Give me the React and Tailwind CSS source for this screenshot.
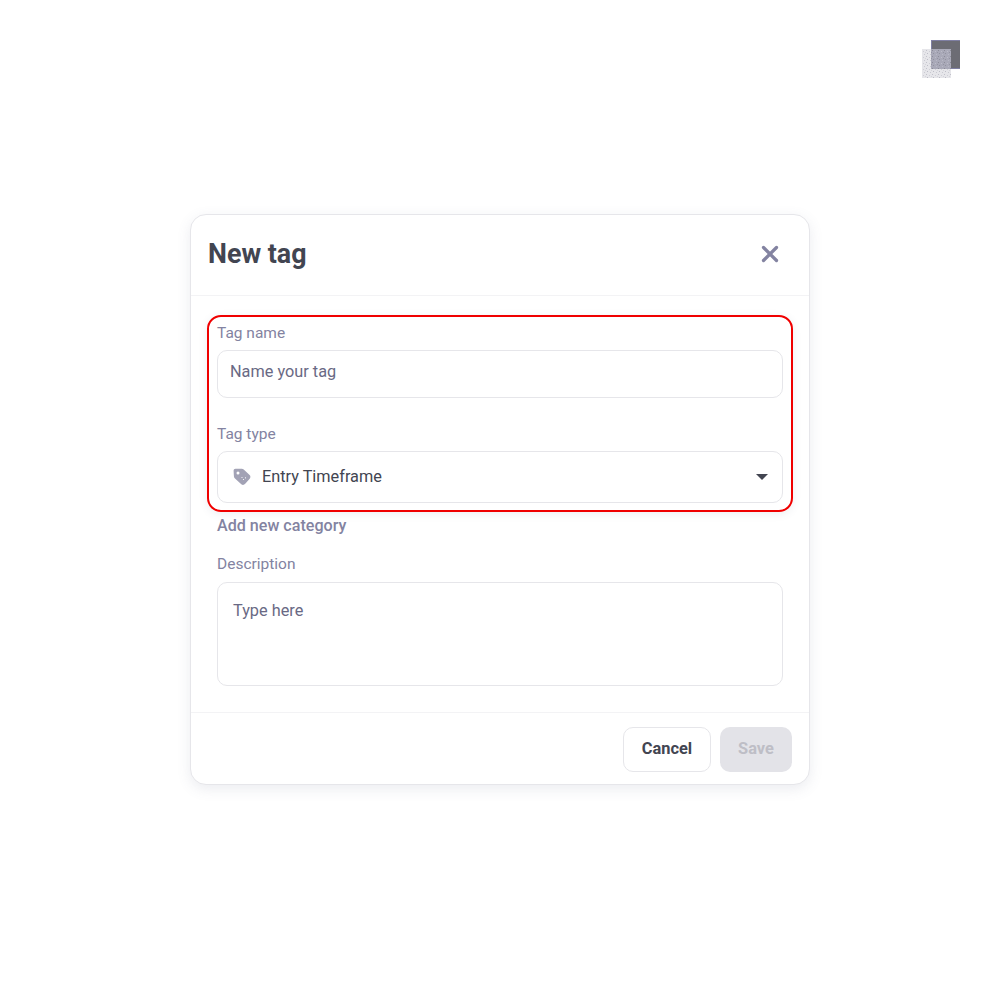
import React from "react";
import { X } from "lucide-react";

const font = { fontFamily: "Roboto, sans-serif" };

// Overlapping squares in the top right corner, the light one is dithered.
function CornerMark() {
  return (
    <svg className="absolute left-[920px] top-[38px]" width="42" height="42" viewBox="0 0 42 42">
      <defs>
        <pattern id="dots" width="6" height="6" patternUnits="userSpaceOnUse">
          <rect width="6" height="6" fill="#e6e6ea" />
          <rect x="0" y="0" width="1" height="1" fill="#c2c2cb" />
          <rect x="3" y="1" width="1" height="1" fill="#cfcfd6" />
          <rect x="1" y="3" width="1" height="1" fill="#bdbdc7" />
          <rect x="4" y="4" width="1" height="1" fill="#c9c9d1" />
          <rect x="5" y="2" width="1" height="1" fill="#d4d4da" />
        </pattern>
        <pattern id="dotsDark" width="6" height="6" patternUnits="userSpaceOnUse">
          <rect width="6" height="6" fill="#a9a9b8" />
          <rect x="0" y="0" width="1" height="1" fill="#8c8c98" />
          <rect x="3" y="1" width="1" height="1" fill="#bdbdc9" />
          <rect x="1" y="3" width="1" height="1" fill="#92929f" />
          <rect x="4" y="4" width="1" height="1" fill="#b9b9c6" />
          <rect x="5" y="2" width="1" height="1" fill="#9494a2" />
        </pattern>
      </defs>
      <rect x="11" y="2" width="29" height="29" fill="#6c6c74" />
      <rect x="11" y="2" width="1" height="29" fill="#7f7fa3" />
      <rect x="11" y="2" width="29" height="1" fill="#7f7fa3" />
      <rect x="31" y="30" width="9" height="1" fill="#7f7fa3" />
      <rect x="2" y="11" width="29" height="29" fill="url(#dots)" />
      <rect x="11" y="11" width="20" height="20" fill="url(#dotsDark)" />
    </svg>
  );
}

function TagIcon() {
  return (
    <svg width="18" height="18" viewBox="0 0 18 18" className="shrink-0">
      <path
        d="M2.500 .8h6.200c.8 0 1.500.3 2 .8l5.900 5.500c1 1 1.100 2.600.1 3.600l-4.700 5.400c-1 1-2.700 1.100-3.700.1L2 10.500c-.7-.6-1.100-1.400-1.100-2.300L.6 2.800C.5 1.700 1.400.8 2.500.8z"
        fill="#a2a2b5"
      />
      <circle cx="5" cy="5" r="1.500" fill="#fff" />
      <circle cx="10.500" cy="11.500" r=".6" fill="#fff" />
      <circle cx="12.500" cy="9.800" r=".6" fill="#fff" />
      <circle cx="9" cy="9.500" r=".6" fill="#fff" />
    </svg>
  );
}

export default function App() {
  return (
    <div className="relative flex h-[1000px] w-[1000px] items-start justify-center bg-white pt-[214px]" style={font}>
      <CornerMark />

      <div className="w-[620px] rounded-[16px] border border-[#e6e6ea] bg-white shadow-[0_4px_14px_rgba(90,100,130,0.12)]">
        <div className="flex h-[81px] items-center justify-between border-b border-[#f3f3f5] pb-[2px] pl-[17px] pr-[26px]">
          <h1 className="text-[26.800px] font-bold leading-none text-[#424551]">New tag</h1>
          <X size={26} strokeWidth={3} className="text-[#8383a1]" />
        </div>

        <div className="relative px-[26px] pt-[27px]">
          {/* highlight frame sits over the first two fields */}
          <div className="pointer-events-none absolute left-[16px] top-[19px] h-[197px] w-[586px] rounded-[14px] border-2 border-[#f00000] shadow-[0_2px_8px_rgba(90,100,130,0.1)]" />

          <label className="block text-[15.500px] leading-[20px] text-[#8383a1]">Tag name</label>
          <div className="mt-[7px] flex h-[48px] items-center rounded-[10px] border border-[#e6e6ea] pb-[3px] pl-[12px] text-[16.300px] text-[#696984]">
            Name your tag
          </div>

          <label className="mt-[26px] block text-[15.500px] leading-[20px] text-[#8383a1]">Tag type</label>
          <div className="mt-[7px] flex h-[52px] items-center justify-between rounded-[10px] border border-[#e6e6ea] pl-[15px] pr-[14px]">
            <div className="flex items-center gap-[11px] text-[16.300px] text-[#424551]">
              <TagIcon />
              Entry Timeframe
            </div>
            <div className="h-0 w-0 border-x-[6px] border-t-[6px] border-x-transparent border-t-[#424551]" />
          </div>

          <div className="mt-[13px] text-[16.100px] font-medium leading-[20px] text-[#8383a1]">Add new category</div>

          <label className="mt-[18px] block text-[15.500px] leading-[20px] text-[#8383a1]">Description</label>
          <div className="mt-[8px] h-[104px] rounded-[10px] border border-[#e6e6ea] pl-[15px] pt-[18px] text-[16.300px] leading-[20px] text-[#696984]">
            Type here
          </div>
        </div>

        <div className="mt-[26px] flex h-[72px] items-start justify-end gap-[9px] border-t border-[#f3f3f5] pr-[17px] pt-[14px]">
          <button className="h-[45px] w-[88px] rounded-[10px] border border-[#e6e6ea] bg-white text-[16.400px] font-bold text-[#424551]">
            Cancel
          </button>
          <button className="h-[45px] w-[72px] rounded-[10px] bg-[#e3e3e8] text-[16.400px] font-bold text-[#bebec6]">
            Save
          </button>
        </div>
      </div>
    </div>
  );
}
